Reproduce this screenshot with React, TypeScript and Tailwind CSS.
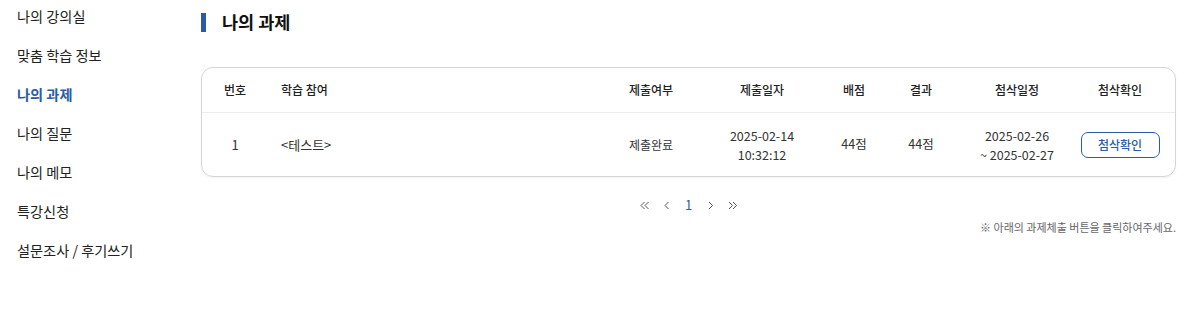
import React from "react";

const menu = ["나의 강의실", "맞춤 학습 정보", "나의 과제", "나의 질문", "나의 메모", "특강신청", "설문조사 / 후기쓰기"];

function Chev({ dir, double }: { dir: "l" | "r"; double?: boolean }) {
  const single = dir === "l" ? "M4.5 1 L1 4.5 L4.5 8" : "M1 1 L4.5 4.5 L1 8";
  const second = dir === "l" ? "M8.5 1 L5 4.5 L8.5 8" : "M5 1 L8.5 4.5 L5 8";
  return (
    <svg width={double ? 10 : 6} height="9" viewBox={double ? "0 0 10 9" : "0 0 6 9"} fill="none" stroke="#555" strokeWidth="1">
      <path d={single} />
      {double && <path d={second} />}
    </svg>
  );
}

export default function App() {
  const font = { fontFamily: '"Noto Sans CJK KR", "Noto Sans", sans-serif' };
  const cols = "grid grid-cols-[66px_345px_76px_146px_38px_96px_96px_1fr] items-center";
  return (
    <div className="flex w-[1200px] h-[310px] bg-white text-[#222]" style={font}>
      <aside className="w-[201px] shrink-0 pl-[17px] pt-[5px] flex flex-col gap-[17px]">
        {menu.map((m) => (
          <div
            key={m}
            className={`h-[22px] leading-[22px] text-[14.2px] ${m === "나의 과제" ? "text-[#2a5ca8] font-bold" : "text-[#222]"}`}
          >
            {m}
          </div>
        ))}
      </aside>
      <main className="w-[975px] flex flex-col">
        <div className="flex items-center h-[20px] mt-[12px]">
          <div className="w-[5px] h-[19px] bg-[#2a5aa8]" />
          <h2 className="ml-[16px] text-[17.5px] font-bold leading-none text-[#111]">나의 과제</h2>
        </div>
        <div className="mt-[35px] border border-[#d6d6d6] rounded-[12px] shadow-[0_1px_2px_rgba(0,0,0,0.06)] text-[12px]">
          <div className={`${cols} h-[45px] border-b border-[#ececec] text-[#222] font-medium`}>
            <div className="text-center">번호</div>
            <div className="pl-[13px]">학습 참여</div>
            <div className="text-center">제출여부</div>
            <div className="text-center">제출일자</div>
            <div className="text-center">배점</div>
            <div className="text-center">결과</div>
            <div className="text-center">첨삭일정</div>
            <div className="text-center">첨삭확인</div>
          </div>
          <div className={`${cols} h-[63px] text-[#333]`}>
            <div className="text-center text-[13px]">1</div>
            <div className="pl-[13px] text-[13px]">&lt;테스트&gt;</div>
            <div className="text-center">제출완료</div>
            <div className="text-center leading-[19px] text-[12.5px]">
              <div>2025-02-14</div>
              <div>10:32:12</div>
            </div>
            <div className="text-center text-[12.5px]">44점</div>
            <div className="text-center text-[12.5px]">44점</div>
            <div className="text-center leading-[19px] text-[12.5px]">
              <div>2025-02-26</div>
              <div>~ 2025-02-27</div>
            </div>
            <div className="flex justify-center">
              <button className="w-[79px] h-[26px] border border-[#2a5ca8] rounded-[7px] text-[#2a5ca8] text-[12px] font-medium bg-white">
                첨삭확인
              </button>
            </div>
          </div>
        </div>
        <div className="mt-[19px] flex justify-center items-center text-[13px] text-[#555] h-[18px]">
          <span className="w-[24px] flex justify-center"><Chev dir="l" double /></span>
          <span className="w-[20px] flex justify-center"><Chev dir="l" /></span>
          <span className="w-[24px] text-center text-[#2a5ca8]">1</span>
          <span className="w-[20px] flex justify-center"><Chev dir="r" /></span>
          <span className="w-[24px] flex justify-center"><Chev dir="r" double /></span>
        </div>
        <div className="mt-[5px] text-right text-[11px] text-[#666]">※ 아래의 과제체출 버튼을 클릭하여주세요.</div>
      </main>
    </div>
  );
}
